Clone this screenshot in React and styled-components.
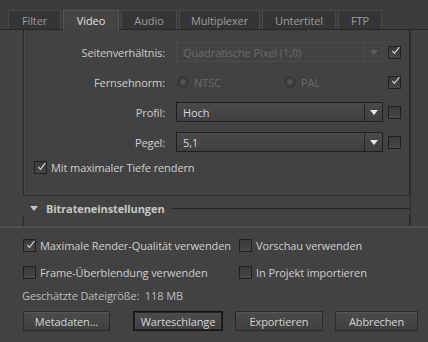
import React from 'react'
import styled, { createGlobalStyle } from 'styled-components'

const Global = createGlobalStyle`
  html, body { margin: 0; padding: 0; background: #3e3e3e; }
  body { font-family: "Open Sans", "DejaVu Sans", sans-serif; font-size: 11px; letter-spacing: -0.1px; color: #c9c9c9; }
`

const Window = styled.div`
  width: 428px;
  height: 342px;
  overflow: hidden;
  background: #424242;
  display: flex;
  flex-direction: column;
`

const TabBar = styled.div`
  display: flex;
  gap: 2px;
  padding: 10px 0 0 8px;
  background: #3c3c3c;
  border-bottom: 1px solid #262626;
  height: 19px;
`

const Tab = styled.div`
  width: ${p => p.w}px;
  height: ${p => (p.active ? 20 : 19)}px;
  box-sizing: border-box;
  display: flex;
  align-items: center;
  justify-content: center;
  background: ${p => (p.active ? '#444' : '#353535')};
  border: 1px solid ${p => (p.active ? '#555' : '#4a4a4a')};
  border-bottom: none;
  color: ${p => (p.active ? '#e2e2e2' : '#9c9c9c')};
  position: relative;
  z-index: ${p => (p.active ? 1 : 0)};
`

const Scroller = styled.div`
  height: 196px;
  display: flex;
  overflow: hidden;
  border-bottom: 2px solid #505050;
`

const ScrollContent = styled.div`
  width: 387px;
  padding-left: 23px;
`

const ScrollTrack = styled.div`
  flex: 1;
  border-left: 1px solid #2e2e2e;
  background: #404040;
`

const GroupBox = styled.div`
  margin-top: -12px;
  border: 1px solid #2a2a2a;
  box-shadow: inset 1px 1px 0 #4d4d4d;
  height: 178px;
  box-sizing: border-box;
  padding: 18px 0 0 0;
`

const Row = styled.div`
  display: flex;
  align-items: center;
  height: 30px;
`

const Label = styled.div`
  width: 141px;
  text-align: right;
  padding-right: 11px;
  color: #cfcfcf;
`

const Select = styled.div`
  width: 207px;
  height: 20px;
  box-sizing: border-box;
  display: flex;
  align-items: center;
  border: 1px solid ${p => (p.disabled ? '#4c4c4c' : '#1f1f1f')};
  background: ${p => (p.disabled ? '#434343' : 'linear-gradient(#4a4a4a, #3f3f3f)')};
  color: ${p => (p.disabled ? '#6c6c6c' : '#d6d6d6')};
`

const SelectText = styled.div`
  flex: 1;
  padding-left: 6px;
`

const Arrow = styled.div`
  width: 17px;
  height: 100%;
  border-left: 1px solid ${p => (p.disabled ? '#4c4c4c' : '#262626')};
  display: flex;
  align-items: center;
  justify-content: center;
  &::after {
    content: '';
    border-left: 4px solid transparent;
    border-right: 4px solid transparent;
    border-top: 5px solid ${p => (p.disabled ? '#5e5e5e' : '#e8e8e8')};
  }
`

const Check = styled.div`
  width: 13px;
  height: 13px;
  box-sizing: border-box;
  border: 1px solid #202020;
  background: linear-gradient(#3a3a3a, #474747);
  margin-left: ${p => p.ml || 0}px;
  display: flex;
  align-items: center;
  justify-content: center;
  flex-shrink: 0;
`

const Tick = () => (
  <svg width="13" height="13" viewBox="0 0 13 13" style={{ marginTop: -3, marginLeft: 2 }}>
    <path d="M2 7 L5 10.5 L12 1.5" fill="none" stroke="#d8d8d8" strokeWidth="1.6" />
  </svg>
)

const Radios = styled.div`
  width: 207px;
  display: flex;
  align-items: center;
  color: #6a6a6a;
`

const Radio = styled.div`
  width: 10px;
  height: 10px;
  border-radius: 50%;
  border: 1px solid #353535;
  background: radial-gradient(circle, #555 0 2px, #3c3c3c 3px);
  margin: 0 5px 0 1px;
`

const Spacer = styled.div`
  width: ${p => p.w}px;
`

const CheckLine = styled.label`
  display: flex;
  align-items: center;
  gap: 4px;
  margin: ${p => p.m || 0};
  color: #cfcfcf;
  white-space: nowrap;
`

const SectionHead = styled.div`
  display: flex;
  align-items: center;
  height: 13px;
  margin-top: 6px;
  padding-left: 7px;
`

const Triangle = styled.div`
  border-left: 4px solid transparent;
  border-right: 4px solid transparent;
  border-top: 5px solid #c4c4c4;
  margin-right: 8px;
`

const HeadText = styled.div`
  font-weight: bold;
  color: #c6c6c6;
  margin-right: 6px;
`

const HeadLine = styled.div`
  flex: 1;
  border-top: 1px solid #262626;
`

const SectionBody = styled.div`
  height: 30px;
  border-left: 1px solid #2a2a2a;
  border-right: 1px solid #2a2a2a;
`

const Bottom = styled.div`
  flex: 1;
  padding: 10px 0 0 23px;
  display: flex;
  flex-direction: column;
`

const OptGrid = styled.div`
  display: grid;
  grid-template-columns: 216px auto;
  row-gap: 12px;
`

const Info = styled.div`
  margin: 8px 0 0 -1px;
  color: #bdbdbd;
`

const Buttons = styled.div`
  display: flex;
  margin-top: 8px;
`

const Button = styled.div`
  width: ${p => p.w}px;
  margin-left: ${p => p.ml || 0}px;
  height: 20px;
  box-sizing: border-box;
  display: flex;
  align-items: center;
  justify-content: center;
  border: 1px solid ${p => (p.focus ? '#111' : '#2b2b2b')};
  box-shadow: ${p => (p.focus ? 'inset 0 0 0 1px #262626' : 'inset 0 1px 0 #575757')};
  background: linear-gradient(#4c4c4c, #3f3f3f);
  color: #d4d4d4;
`

const tabs = [
  ['Filter', 53],
  ['Video', 56],
  ['Audio', 56],
  ['Multiplexer', 81],
  ['Untertitel', 74],
  ['FTP', 44],
]

const App = () => {
  return (
    <Window>
      <Global />
      <TabBar>
        {tabs.map(([t, w]) => (
          <Tab key={t} w={w} active={t === 'Video'}>{t}</Tab>
        ))}
      </TabBar>
      <Scroller>
        <ScrollContent>
          <GroupBox>
            <Row>
              <Label>Seitenverhältnis:</Label>
              <Select disabled>
                <SelectText>Quadratische Pixel (1,0)</SelectText>
                <Arrow disabled />
              </Select>
              <Check ml={5}><Tick /></Check>
            </Row>
            <Row>
              <Label>Fernsehnorm:</Label>
              <Radios>
                <Radio />NTSC<Spacer w={62} />
                <Radio />PAL
              </Radios>
              <Check ml={5}><Tick /></Check>
            </Row>
            <Row>
              <Label>Profil:</Label>
              <Select>
                <SelectText>Hoch</SelectText>
                <Arrow />
              </Select>
              <Check ml={5} />
            </Row>
            <Row>
              <Label>Pegel:</Label>
              <Select>
                <SelectText>5,1</SelectText>
                <Arrow />
              </Select>
              <Check ml={5} />
            </Row>
            <CheckLine m="3px 0 0 10px">
              <Check><Tick /></Check>
              Mit maximaler Tiefe rendern
            </CheckLine>
          </GroupBox>
          <SectionHead>
            <Triangle />
            <HeadText>Bitrateneinstellungen</HeadText>
            <HeadLine />
          </SectionHead>
          <SectionBody />
        </ScrollContent>
        <ScrollTrack />
      </Scroller>
      <Bottom>
        <OptGrid>
          <CheckLine>
            <Check><Tick /></Check>
            Maximale Render-Qualität verwenden
          </CheckLine>
          <CheckLine>
            <Check />
            Vorschau verwenden
          </CheckLine>
          <CheckLine>
            <Check />
            Frame-Überblendung verwenden
          </CheckLine>
          <CheckLine>
            <Check />
            In Projekt importieren
          </CheckLine>
        </OptGrid>
        <Info>Geschätzte Dateigröße:&nbsp; 118 MB</Info>
        <Buttons>
          <Button w={87}>Metadaten...</Button>
          <Button w={90} ml={23} focus>Warteschlange</Button>
          <Button w={88} ml={12}>Exportieren</Button>
          <Button w={83} ml={12}>Abbrechen</Button>
        </Buttons>
      </Bottom>
    </Window>
  )
}

export default App
